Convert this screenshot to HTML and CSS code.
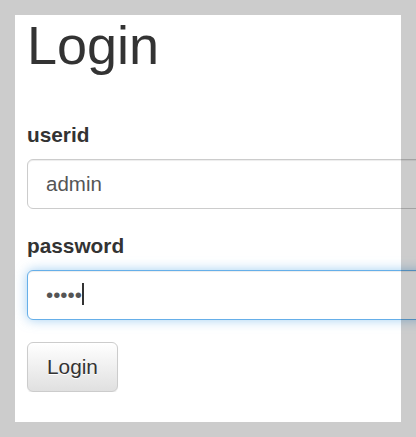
FILE: index.html
```html
<!DOCTYPE html>
<html lang="en">
<head>
  <meta charset="UTF-8" />
  <meta name="viewport" content="width=device-width, initial-scale=1.0"/>
  <title>Login</title>
  <link rel="stylesheet" href="styles.css">
</head>
<body>

  <div class="container">
    <h1>Login</h1>
    <form class="login-form" onsubmit="return false">
      <div class="form-group">
        <label for="userid">userid</label>
        <input class="form-control" id="userid" type="text" value="admin">
      </div>
      <div class="form-group">
        <label for="password">password</label>
        <div class="caret-wrap">
          <input class="form-control focused" id="password" type="password" value="admin">
        </div>
      </div>
      <button class="btn" type="submit">Login</button>
    </form>
  </div>

  <div class="frame"></div>

</body>
</html>
```

FILE: styles.css
```css
html, body {
  margin: 0;
  background: #ffffff;
}

body {
  font-family: "Liberation Sans", Helvetica, Arial, sans-serif;
  color: #333333;
  overflow: hidden;
}

.container {
  padding: 16px 0 0 27px;
}

h1 {
  margin: 0;
  font-size: 54px;
  font-weight: 500;
  line-height: 1.1;
}

.login-form {
  margin-top: 44.3px;
}

.form-group {
  margin-bottom: 22px;
}

label {
  display: block;
  font-size: 20.8px;
  font-weight: bold;
  line-height: 30px;
  margin-bottom: 9px;
}

.form-control {
  display: block;
  box-sizing: border-box;
  width: 400px;
  height: 50px;
  padding: 0 18px;
  font-family: inherit;
  font-size: 20.5px;
  color: #555555;
  background: #ffffff;
  border: 1px solid #cccccc;
  border-radius: 6px;
  box-shadow: inset 0 1px 1px rgba(0,0,0,0.075);
  outline: none;
}

.form-control.focused {
  border-color: #66afe9;
  box-shadow: inset 0 1px 1px rgba(0,0,0,0.075), 0 0 12px rgba(102,175,233,0.6);
}

/* text caret of the focused field */
.caret-wrap {
  position: relative;
}

.caret-wrap::after {
  content: "";
  position: absolute;
  left: 55px;
  top: 13px;
  width: 2px;
  height: 22px;
  background: #333333;
}

.btn {
  box-sizing: border-box;
  height: 50px;
  padding: 0 19px;
  font-family: inherit;
  font-size: 20.8px;
  color: #333333;
  text-shadow: 0 1px 0 #ffffff;
  background: linear-gradient(to bottom, #ffffff 0%, #e0e0e0 100%);
  border: 1px solid #cccccc;
  border-radius: 6px;
  box-shadow: inset 0 1px 0 rgba(255,255,255,0.15), 0 1px 1px rgba(0,0,0,0.075);
  cursor: pointer;
}

.frame {
  position: fixed;
  inset: 0;
  border: 15px solid rgba(0,0,0,0.2);
  pointer-events: none;
}
```
